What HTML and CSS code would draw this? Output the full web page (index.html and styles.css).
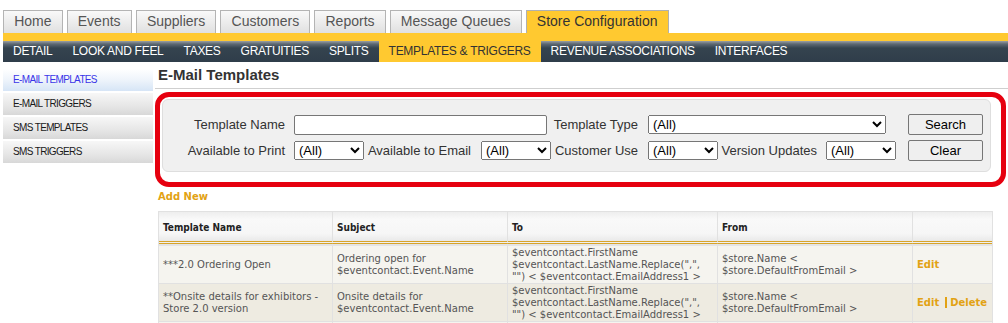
FILE: index.html
```html
<!DOCTYPE html>
<html lang="en">
<head>
<meta charset="utf-8">
<title>E-Mail Templates</title>
<link rel="stylesheet" href="styles.css">
</head>
<body>
<div class="tabs">
  <a class="tab" href="#">Home</a>
  <a class="tab" href="#">Events</a>
  <a class="tab" href="#">Suppliers</a>
  <a class="tab" href="#">Customers</a>
  <a class="tab" href="#">Reports</a>
  <a class="tab" href="#">Message Queues</a>
  <a class="tab active" href="#">Store Configuration</a>
</div>
<div class="ybar"></div>
<div class="subnav">
  <a href="#">DETAIL</a>
  <a href="#">LOOK AND FEEL</a>
  <a href="#">TAXES</a>
  <a href="#">GRATUITIES</a>
  <a href="#">SPLITS</a>
  <a class="active" href="#">TEMPLATES &amp; TRIGGERS</a>
  <a href="#">REVENUE ASSOCIATIONS</a>
  <a href="#">INTERFACES</a>
</div>
<div class="layout">
  <div class="sidebar">
    <a class="side-item active" href="#">E-Mail Templates</a>
    <a class="side-item" href="#">E-Mail Triggers</a>
    <a class="side-item" href="#">SMS Templates</a>
    <a class="side-item" href="#">SMS Triggers</a>
  </div>
  <div class="main">
    <h1 class="title">E-Mail Templates</h1>
    <div class="highlight">
      <div class="panel">
        <div class="search-grid">
          <label class="lbl c1">Template Name</label>
          <input class="txt" type="text">
          <label class="lbl c5">Template Type</label>
          <select class="sel wide"><option>(All)</option></select>
          <button class="btn" type="button">Search</button>

          <label class="lbl c1">Available to Print</label>
          <select class="sel"><option>(All)</option></select>
          <label class="lbl">Available to Email</label>
          <select class="sel"><option>(All)</option></select>
          <label class="lbl">Customer Use</label>
          <select class="sel"><option>(All)</option></select>
          <label class="lbl c7">Version Updates</label>
          <select class="sel"><option>(All)</option></select>
          <button class="btn" type="button">Clear</button>
        </div>
      </div>
    </div>
    <div class="add"><a class="add-new" href="#">Add New</a></div>
    <table class="grid">
      <colgroup>
        <col class="w1"><col class="w2"><col class="w3"><col class="w4"><col class="w5">
      </colgroup>
      <thead>
        <tr><th>Template Name</th><th>Subject</th><th>To</th><th>From</th><th></th></tr>
      </thead>
      <tbody>
        <tr class="odd">
          <td>***2.0 Ordering Open</td>
          <td>Ordering open for $eventcontact.Event.Name</td>
          <td>$eventcontact.FirstName $eventcontact.LastName.Replace(",", "") &lt; $eventcontact.EmailAddress1 &gt;</td>
          <td>$store.Name &lt; $store.DefaultFromEmail &gt;</td>
          <td class="acts"><a href="#">Edit</a></td>
        </tr>
        <tr class="even">
          <td>**Onsite details for exhibitors - Store 2.0 version</td>
          <td>Onsite details for $eventcontact.Event.Name</td>
          <td>$eventcontact.FirstName $eventcontact.LastName.Replace(",", "") &lt; $eventcontact.EmailAddress1 &gt;</td>
          <td>$store.Name &lt; $store.DefaultFromEmail &gt;</td>
          <td class="acts"><a href="#">Edit</a><a class="del" href="#">Delete</a></td>
        </tr>
        <tr class="odd">
          <td></td>
          <td></td>
          <td class="top">$eventcontact.FirstName</td>
          <td></td>
          <td></td>
        </tr>
      </tbody>
    </table>
  </div>
</div>
</body>
</html>
```
FILE: styles.css
```css
html {
  overflow: hidden;
}
body {
  margin: 10px 0 0 3px;
  font-family: "Liberation Sans", Arial, sans-serif;
  color: #333;
  background: #fff;
}

/* top tabs */
.tabs {
  display: flex;
  height: 23px;
}
.tab {
  box-sizing: border-box;
  height: 23px;
  padding: 0 10.15px;
  margin-right: 4px;
  border: 1px solid #b4b4b4;
  border-bottom: 0;
  background: linear-gradient(#f9f9f9, #e0e0e0);
  color: #555;
  font-size: 14px;
  line-height: 21px;
  text-decoration: none;
  white-space: nowrap;
}
.tab.active {
  background: #ffc930;
  color: #333;
  border-color: #b0b0b0;
}
.ybar {
  height: 8px;
  background: #ffc930;
}
.subnav {
  display: flex;
  height: 21px;
  background: linear-gradient(#9aa0a4 0, #5d6872 3px, #35444f 7px, #2f3d4a 100%);
}
.subnav a {
  padding: 0 10px;
  font-size: 12px;
  line-height: 21px;
  letter-spacing: -0.28px;
  color: #fff;
  text-decoration: none;
  white-space: nowrap;
}
.subnav a.active {
  background: #ffc930;
  color: #333;
}

/* layout */
.layout {
  display: flex;
  align-items: flex-start;
}
.sidebar {
  width: 150px;
  margin-top: 7px;
  display: flex;
  flex-direction: column;
  gap: 2px;
}
.side-item {
  display: block;
  height: 22px;
  line-height: 22px;
  padding-left: 10px;
  font-size: 10px;
  letter-spacing: -0.65px;
  text-transform: uppercase;
  text-decoration: none;
  color: #1a1a1a;
  background: linear-gradient(#f7f7f7, #e6e6e6 60%, #d8d8d8);
}
.side-item.active {
  color: #3a35e8;
  background: linear-gradient(#ffffff, #eef4fb 50%, #d6e5f6);
}
.main {
  flex: 1;
  margin-left: 2px;
  margin-top: 3px;
}
.title {
  margin: 0;
  padding: 1px 0 4px 3px;
  font-size: 15px;
  line-height: 18px;
  font-weight: bold;
  color: #333;
  border-bottom: 1px solid #cfcfcf;
}

/* highlighted search box */
.highlight {
  margin-top: 3px;
  width: 851px;
  box-sizing: border-box;
  border: 5px solid #e6000f;
  border-radius: 14px;
  padding: 2px 10px 10px 2px;
}
.panel {
  box-sizing: border-box;
  height: 73px;
  border: 1px solid #dedede;
  border-radius: 6px;
  background: #f0f0f0;
}
.search-grid {
  display: grid;
  grid-template-columns: 131px 70px 117px 70px 97px 70px 108px 70px 87px;
  grid-template-rows: 21px 21px;
  row-gap: 5px;
  align-items: center;
  padding-top: 14px;
}
.lbl {
  justify-self: end;
  padding-right: 10px;
  font-size: 13px;
  color: #333;
  white-space: nowrap;
}
.lbl.c1,
.lbl.c7 {
  padding-right: 9px;
}
.lbl.c5 {
  grid-column: 5;
}
.txt {
  grid-column: 2 / span 3;
  box-sizing: border-box;
  width: 253px;
  height: 20px;
  margin: 0;
  padding: 1px 3px;
  border: 1px solid #767676;
  border-radius: 2px;
  background: #fff;
  font: 13px "Liberation Sans", Arial, sans-serif;
}
.sel {
  box-sizing: border-box;
  width: 70px;
  height: 19px;
  margin: 0;
  font: 13px "Liberation Sans", Arial, sans-serif;
  color: #000;
}
.sel.wide {
  grid-column: 6 / span 3;
  width: 238px;
}
.btn {
  grid-column: 9;
  justify-self: end;
  box-sizing: border-box;
  width: 75px;
  height: 21px;
  margin: 0;
  padding: 0;
  border: 1px solid #767676;
  border-radius: 2px;
  background: #efefef;
  color: #000;
  font: 13px "Liberation Sans", Arial, sans-serif;
}

/* add new */
.add {
  margin: 2px 0 8px 3px;
  line-height: 12px;
}
.add-new {
  font: bold 10px/12px "DejaVu Sans", Verdana, sans-serif;
  color: #e2a214;
  text-decoration: none;
}

/* table */
.grid {
  margin-left: 3px;
  width: 835px;
  table-layout: fixed;
  border-collapse: separate;
  border-spacing: 0;
  border: 1px solid #e1e1e1;
  border-bottom: 0;
  font-family: "DejaVu Sans", Verdana, sans-serif;
  font-size: 10px;
  line-height: 12px;
  color: #555;
}
.w1 { width: 174px; }
.w2 { width: 175px; }
.w3 { width: 210px; }
.w4 { width: 195px; }
.w5 { width: 79px; }
.grid th {
  text-align: left;
  padding: 8px 4px 5px;
  line-height: 16px;
  font-family: "DejaVu Sans Condensed", "DejaVu Sans", Verdana, sans-serif;
  font-stretch: condensed;
  font-weight: bold;
  color: #222;
  background: linear-gradient(#eeeeee, #f9f9f9 25%, #f6f6f6 75%, #e9e9e9);
  border-right: 1px solid #e1e1e1;
  border-bottom: 3px double #d8a42a;
}
.grid td {
  padding: 1px 4px 0;
  vertical-align: middle;
  border-right: 1px solid #e1e1e1;
  border-bottom: 1px solid #e1e1e1;
}
.grid td.top {
  vertical-align: top;
}
.grid th:last-child,
.grid td:last-child {
  border-right: 0;
}
.grid tbody tr:first-child td {
  border-top: 2px solid #e4e4e4;
}
.grid tr.odd td {
  background: #f5f4ef;
}
.grid tr.even td {
  background: #eeebe1;
}
.acts {
  white-space: nowrap;
  font-weight: bold;
}
.acts a {
  color: #e2a214;
  text-decoration: none;
}
.acts .del {
  margin-left: 6px;
  padding-left: 3px;
  border-left: 2px solid #e2a214;
}
```
